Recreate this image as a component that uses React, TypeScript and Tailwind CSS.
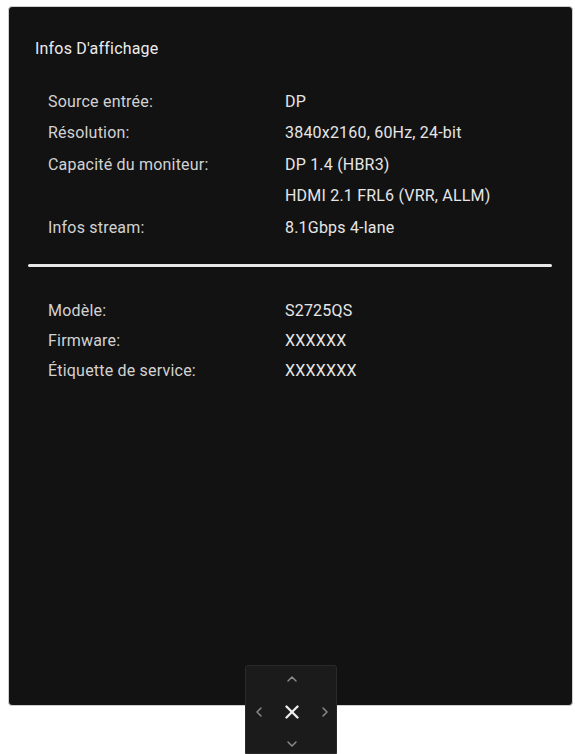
import { ChevronUp, ChevronDown, ChevronLeft, ChevronRight, X } from "lucide-react";

const streamRows = [
  { label: "Source entrée:", values: ["DP"] },
  { label: "Résolution:", values: ["3840x2160, 60Hz, 24-bit"] },
  { label: "Capacité du moniteur:", values: ["DP 1.4 (HBR3)", "HDMI 2.1 FRL6 (VRR, ALLM)"] },
  { label: "Infos stream:", values: ["8.1Gbps 4-lane"] },
];

const deviceRows = [
  { label: "Modèle:", value: "S2725QS" },
  { label: "Firmware:", value: "XXXXXX" },
  { label: "Étiquette de service:", value: "XXXXXXX" },
];

export default function App() {
  return (
    <div
      className="relative w-[575px] h-[754px] bg-white overflow-hidden pt-[6px] pl-[8px]"
      style={{ fontFamily: "Roboto, 'Noto Sans', sans-serif" }}
    >
      {/* OSD panel */}
      <div className="w-[565px] h-[700px] bg-[#121212] border border-[#cfcfcf] rounded-[4px] flex flex-col">
        <div className="pl-[26px] pt-[31px] text-[16px] tracking-[0.2px] leading-[22px] text-[#ececec]">
          Infos D'affichage
        </div>

        <div className="mt-[26px] pl-[39px] flex flex-col">
          {streamRows.map((row) =>
            row.values.map((v, i) => (
              <div key={row.label + i} className="flex h-[31.5px] items-center text-[16px] tracking-[0.2px]">
                <span className="w-[237px] text-[#d2d2d2]">{i === 0 ? row.label : ""}</span>
                <span className="text-[#e6e6e6]">{v}</span>
              </div>
            ))
          )}
        </div>

        <div className="mt-[20px] ml-[19px] w-[524px] h-[3px] bg-[#e8e8e8] rounded-full" />

        <div className="mt-[29px] pl-[39px] flex flex-col">
          {deviceRows.map((row) => (
            <div key={row.label} className="flex h-[30px] items-center text-[16px] tracking-[0.2px]">
              <span className="w-[237px] text-[#d2d2d2]">{row.label}</span>
              <span className="text-[#e6e6e6]">{row.value}</span>
            </div>
          ))}
        </div>
      </div>

      {/* Navigation joystick overlay */}
      <div className="absolute left-[245px] top-[665px] w-[92px] h-[89px] bg-[#1b1b1b] border border-[#2a2a2a] rounded-t-[3px] grid grid-cols-[26px_40px_26px] grid-rows-[26px_40px_23px] place-items-center">
        <div />
        <ChevronUp size={16} strokeWidth={2.2} className="text-[#8a8a8a]" />
        <div />
        <ChevronLeft size={16} strokeWidth={2.2} className="text-[#8a8a8a]" />
        <X size={22} strokeWidth={2.6} className="text-[#ededed]" />
        <ChevronRight size={16} strokeWidth={2.2} className="text-[#8a8a8a]" />
        <div />
        <ChevronDown size={16} strokeWidth={2.2} className="text-[#8a8a8a]" />
        <div />
      </div>
    </div>
  );
}
